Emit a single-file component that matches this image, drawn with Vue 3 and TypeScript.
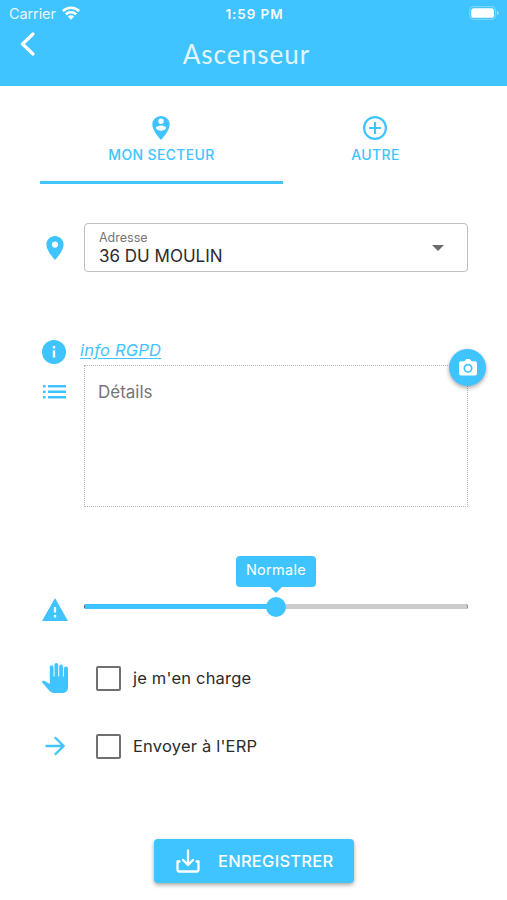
<script setup lang="ts">
import { ref, computed } from 'vue'

const details = ref('')
const activeTab = ref<'secteur' | 'autre'>('secteur')
const priority = ref(50)
const checks = ref([
  { id: 'charge', label: "je m'en charge", checked: false },
  { id: 'erp', label: "Envoyer à l'ERP", checked: false },
])
const fillWidth = computed(() => `${priority.value}%`)
</script>

<template>
  <div class="screen">
    <header class="header">
      <div class="status">
        <div class="carrier">
          <span class="carrier-name">Carrier</span>
          <svg class="wifi" viewBox="0 0 18 14" fill="none" stroke="#fff" stroke-width="2.5">
            <path d="M.9 5.2a11.5 11.5 0 0 1 16.2 0M3.8 8.3a7.4 7.4 0 0 1 10.4 0" />
            <path d="M9 13.7 5.9 10.5a4.4 4.4 0 0 1 6.2 0z" fill="#fff" stroke="none" />
          </svg>
        </div>
        <span class="time">1:59 PM</span>
        <svg class="battery" viewBox="0 0 30 14">
          <rect x=".6" y=".6" width="26" height="12.8" rx="4" fill="none" stroke="#fff" stroke-opacity=".35" />
          <rect x="2.2" y="2.2" width="22.8" height="9.6" rx="2.6" fill="#fff" />
          <path d="M28 5v4q1.7-.7 1.7-2T28 5z" fill="#fff" fill-opacity=".5" />
        </svg>
      </div>
      <div class="titlebar">
        <button class="back" type="button" aria-label="Retour">
          <svg viewBox="0 0 16 24" fill="none" stroke="#fff" stroke-width="3.2" stroke-linecap="round" stroke-linejoin="round">
            <path d="M13 2 2.500 12 13 22" />
          </svg>
        </button>
        <h1 class="title">Ascenseur</h1>
      </div>
    </header>

    <main class="content">
      <nav class="tabs">
        <button type="button" class="tab" :class="{ active: activeTab === 'secteur' }" @click="activeTab = 'secteur'">
          <svg class="icon" viewBox="0 0 24 24" fill="currentColor">
            <path d="M12 0C7.200 0 3.300 3.800 3.300 8.600 3.300 15.200 12 24 12 24s8.700-8.800 8.700-15.400C20.700 3.800 16.800 0 12 0zm0 2.500a2.700 2.700 0 1 1 0 5.400 2.700 2.700 0 0 1 0-5.400zm0 12.400c-2.200 0-4.100-1.100-5.200-2.800.1-1.800 3.500-2.700 5.200-2.700s5.200.9 5.200 2.700c-1.100 1.700-3 2.800-5.200 2.800z" />
          </svg>
          <span>MON SECTEUR</span>
        </button>
        <button type="button" class="tab" :class="{ active: activeTab === 'autre' }" @click="activeTab = 'autre'">
          <svg class="icon" viewBox="0 0 24 24" fill="none" stroke="currentColor" stroke-width="2.200">
            <circle cx="12" cy="12" r="10.900" />
            <path d="M12 6v12M6 12h12" />
          </svg>
          <span>AUTRE</span>
        </button>
      </nav>

      <section class="row address-row">
        <svg class="pin" viewBox="0 0 18 24" fill="#40c4ff">
          <path fill-rule="evenodd" d="M9 0C4.300 0 .4 3.800.4 8.500.4 15 9 24 9 24s8.600-9 8.600-15.500C17.600 3.800 13.700 0 9 0zm0 5.500a3.100 3.100 0 1 1 0 6.200 3.100 3.100 0 0 1 0-6.200z" />
        </svg>
        <div class="select">
          <div class="select-text">
            <span class="select-label">Adresse</span>
            <span class="select-value">36 DU MOULIN</span>
          </div>
          <svg class="caret" viewBox="0 0 12 6"><path d="M0 0h12L6 6z" fill="#6b6b6b" /></svg>
        </div>
      </section>

      <section class="row info-row">
        <svg class="icon" viewBox="0 0 24 24">
          <circle cx="12" cy="12" r="12" fill="#40c4ff" />
          <path d="M12 10.600v7M12 6v2.400" stroke="#fff" stroke-width="2.400" />
        </svg>
        <a class="info-link" href="#">info RGPD</a>
      </section>

      <section class="row details-row">
        <svg class="list" viewBox="0 0 24 14" fill="#40c4ff">
          <path d="M0 0h2.600v2.600H0zM5 0h18v2.600H5zM0 5.500h2.600v2.600H0zM5 5.500h18v2.600H5zM0 11h2.600v2.600H0zM5 11h18v2.600H5z" />
        </svg>
        <div class="details">
          <textarea v-model="details" class="textarea" placeholder="Détails"></textarea>
          <button class="camera" type="button" aria-label="Photo">
            <svg viewBox="0 0 18 17">
              <path d="M2 2.200h3.500L7.200 0h3.600l1.700 2.200H16a2 2 0 0 1 2 2v10.300a2 2 0 0 1-2 2H2a2 2 0 0 1-2-2V4.200a2 2 0 0 1 2-2z" fill="#fff" />
              <circle cx="9" cy="9.300" r="3.700" fill="none" stroke="#40c4ff" stroke-width="1.700" />
            </svg>
          </button>
        </div>
      </section>

      <section class="row slider-row">
        <svg class="warning" viewBox="0 0 26 23">
          <path d="M13 0 26 23H0z" fill="#40c4ff" />
          <path d="M13 9v5.500M13 17v2.500" stroke="#fff" stroke-width="2.300" />
        </svg>
        <div class="slider">
          <div class="track"><div class="fill" :style="{ width: fillWidth }"></div></div>
          <div class="thumb" :style="{ left: fillWidth }"></div>
          <div class="bubble" :style="{ left: fillWidth }">Normale</div>
        </div>
      </section>

      <section class="checks">
        <label v-for="item in checks" :key="item.id" class="row check-row">
          <svg v-if="item.id === 'charge'" class="hand" viewBox="0 0 28 30" fill="#40c4ff">
            <path d="M27 5.600v19.500a4.800 4.800 0 0 1-4.800 4.800H13c-1.700 0-3.200-.7-4.400-1.900L.6 18.800s.9-1.100 1.900-1.100c.5 0 .9.100 1.300.4l5 2.800V4.100a1.850 1.850 0 0 1 3.700 0v9.400h1V1.850a1.850 1.850 0 0 1 3.700 0V13.500h1V3.400a1.850 1.850 0 0 1 3.700 0v10.100h1V5.600a2 2 0 0 1 4.100 0z" />
          </svg>
          <svg v-else class="arrow" viewBox="0 0 20 20" fill="none" stroke="#40c4ff" stroke-width="2.300">
            <path d="M.5 10h17.500M9.800 1.200l8.800 8.800-8.800 8.800" />
          </svg>
          <input v-model="item.checked" type="checkbox" class="box" />
          <span class="check-label">{{ item.label }}</span>
        </label>
      </section>

      <button class="save" type="button">
        <svg class="download" viewBox="0 0 24 24" fill="none" stroke="#fff" stroke-width="2.300" stroke-linecap="round" stroke-linejoin="round">
          <path d="M12 1.500v14M7 11l5 5 5-5M3.500 12.500h-2v8q0 2 2 2h17q2 0 2-2v-8h-2" />
        </svg>
        <span>ENREGISTRER</span>
      </button>
    </main>
  </div>
</template>

<style>
body { margin: 0; background: #fff; }
</style>

<style scoped>
* { box-sizing: border-box; }
.screen { width: 507px; height: 900px; overflow: hidden; background: #fff; font-family: Inter, "Liberation Sans", sans-serif; color: #2b2b2b; }
button { border: 0; padding: 0; margin: 0; background: none; font-family: inherit; cursor: pointer; }
svg { display: block; flex: none; }
.header { height: 86px; background: #40c4ff; color: #fff; }
.status { height: 27px; display: grid; grid-template-columns: 1fr auto 1fr; align-items: center; padding: 0 8px 0 9px; }
.carrier { display: flex; align-items: center; gap: 6px; }
.carrier-name { font-size: 14.500px; line-height: 20px; letter-spacing: -.1px; opacity: .88; }
.wifi { width: 18px; height: 14px; margin-top: -2px; }
.time { font-size: 13.500px; line-height: 20px; font-weight: 600; letter-spacing: .9px; margin-right: -1px; opacity: .95; }
.battery { width: 30px; height: 14px; justify-self: end; margin-top: -1px; }
.titlebar { display: grid; grid-template-columns: 60px 1fr 60px; height: 59px; }
.back { width: 16px; height: 24px; margin: 5px 0 0 20px; }
.back svg { width: 16px; height: 24px; }
.title { margin: 9px 0 0 -14px; text-align: center; font-family: Lato, sans-serif; font-size: 26px; line-height: 36px; font-weight: 400; letter-spacing: 1.050px; opacity: .85; }
.content { padding: 0 39px 0 40px; display: flex; flex-direction: column; }
.tabs { display: grid; grid-template-columns: 243px 185px; height: 98px; }
.tab { display: flex; flex-direction: column; align-items: center; padding-top: 30px; gap: 5px; color: #40c4ff; font-size: 14px; line-height: 20px; font-weight: 500; letter-spacing: .35px; border-bottom: 3px solid transparent; }
.tab .icon { margin-right: 1px; }
.tab.active { border-bottom-color: #40c4ff; }
.icon { width: 24px; height: 24px; }
.row { display: flex; align-items: center; }
.address-row { margin-top: 39px; height: 49px; }
.pin { width: 18px; height: 24px; margin: 0 20px 0 6px; }
.select { flex: 1; height: 49px; display: flex; align-items: center; justify-content: space-between; border: 1px solid #bdbdbd; border-radius: 4px; padding: 0 23px 0 14px; }
.select-text { display: flex; flex-direction: column; }
.select-label { font-size: 12.500px; line-height: 16px; color: #757575; }
.select-value { font-size: 17px; line-height: 20px; }
.caret { width: 12px; height: 6px; }
.info-row { margin-top: 67px; height: 26px; padding-left: 2px; gap: 14px; }
.info-link { color: #40c4ff; font-size: 16.500px; line-height: 20px; letter-spacing: .2px; font-style: italic; margin-top: -4px; text-underline-offset: 2px; }
.details-row { align-items: flex-start; }
.list { width: 24px; height: 14px; margin: 20px 17px 0 3px; }
.details { position: relative; flex: 1; height: 142px; }
.textarea { display: block; width: 100%; height: 142px; border: 1px dotted #b5b5b5; border-radius: 0; padding: 16px 12px 16px 13px; resize: none; outline: none; font: 17px/20px Inter, sans-serif; background: none; color: #2b2b2b; }
.textarea::placeholder { color: #757575; opacity: 1; }
.camera { position: absolute; right: -18px; top: -16px; width: 37px; height: 37px; border-radius: 50%; background: #40c4ff; display: grid; place-items: center; box-shadow: 0 2px 4px rgba(0, 0, 0, .35); }
.camera svg { width: 18px; height: 17px; }
.slider-row { margin-top: 89px; height: 26px; }
.warning { width: 26px; height: 23px; margin: 0 16px 0 2px; }
.slider { position: relative; flex: 1; height: 20px; display: flex; align-items: center; margin-top: -5px; }
.track { width: 100%; height: 5px; background: #ccc; border-radius: 2px; border-left: 1px solid #666; border-right: 1px solid #888; }
.fill { height: 5px; background: #40c4ff; }
.thumb { position: absolute; top: 0; width: 20px; height: 20px; border-radius: 50%; background: #40c4ff; transform: translateX(-50%); }
.bubble { position: absolute; top: -41px; width: 80px; height: 31px; border-radius: 4px; background: #40c4ff; color: #fff; transform: translateX(-50%); text-align: center; font-size: 14.500px; line-height: 28px; letter-spacing: .3px; }
.bubble::after { content: ""; position: absolute; left: 34px; top: 31px; border: 6px solid transparent; border-bottom: 0; border-top-color: #40c4ff; }
.checks { margin-top: 41px; display: flex; flex-direction: column; gap: 38px; }
.check-row { height: 30px; }
.hand { width: 28px; height: 30px; margin: 0 26px 0 1px; }
.hand + .box { margin-left: 1px; }
.arrow { width: 20px; height: 20px; margin: 0 31px 0 5px; }
.box { appearance: none; width: 25px; height: 25px; margin: 0 12px 0 0; border: 2px solid #707070; border-radius: 2px; }
.check-label { font-size: 16.500px; line-height: 24px; letter-spacing: .2px; }
.save { width: 200px; height: 44px; margin: 78px 0 0 114px; border-radius: 4px; background: #40c4ff; color: #fff; display: flex; align-items: center; padding-left: 22px; gap: 18px; font-size: 16.500px; font-weight: 500; letter-spacing: .25px; box-shadow: 0 2px 4px rgba(0, 0, 0, .35); }
.download { width: 24px; height: 24px; }
</style>
